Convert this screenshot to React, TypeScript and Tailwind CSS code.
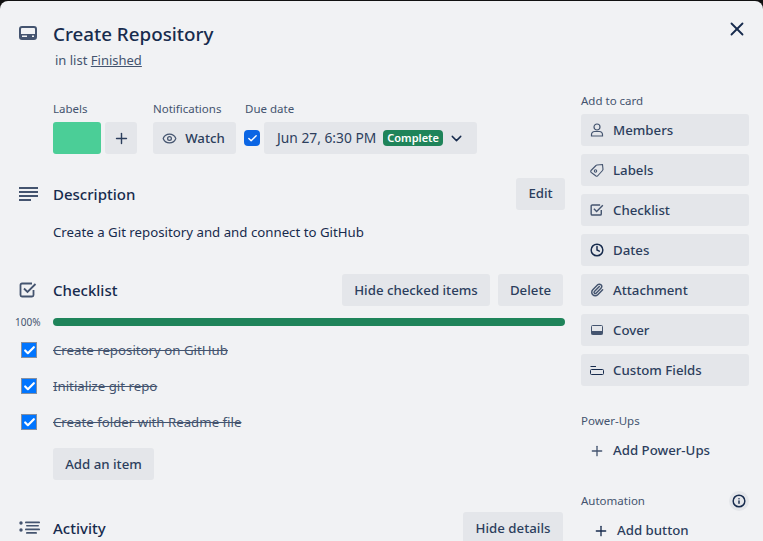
import { ReactNode } from 'react';
import { Plus, X, Eye, ChevronDown, Check, Clock, Paperclip, Info } from 'lucide-react';

function CardIcon({ className = '' }: { className?: string }) {
  return (
    <svg viewBox="0 0 18 14" className={className} fill="none">
      <rect x="1" y="1" width="16" height="12" rx="2" stroke="currentColor" strokeWidth="2" />
      <rect x="1" y="8" width="16" height="5" fill="currentColor" />
      <rect x="3" y="9.5" width="5" height="1.5" fill="#f1f2f4" />
      <rect x="13" y="9.5" width="2" height="1.5" fill="#f1f2f4" />
    </svg>
  );
}

function CheckIcon({ className = '' }: { className?: string }) {
  return (
    <svg viewBox="0 0 18 16" className={className} fill="none" stroke="currentColor" strokeWidth="1.8">
      <path d="M13 1.5H3A1.5 1.5 0 0 0 1.5 3v10A1.5 1.5 0 0 0 3 14.5h10a1.5 1.5 0 0 0 1.5-1.5V8" />
      <path d="M5 6.5l3.5 3.5L16.5 2" />
    </svg>
  );
}

function UserIcon() {
  return (
    <svg viewBox="0 0 14 14" className="w-3.5 h-3.5 text-[#44546f]" fill="none" stroke="currentColor" strokeWidth="1.2">
      <circle cx="7" cy="4" r="3" />
      <path d="M1.5 13v-1.5A3 3 0 0 1 4.5 8.5h5a3 3 0 0 1 3 3V13z" />
    </svg>
  );
}

function TagIcon() {
  return (
    <svg viewBox="0 0 14 14" className="w-3.5 h-3.5 text-[#44546f]" fill="none" stroke="currentColor" strokeWidth="1.1">
      <path d="M1 7.5L6 2.5A1.5 1.5 0 0 1 7 2l5.5-.5L13 6.5l-.5 1L8 12.5a1.5 1.5 0 0 1-2 .5L2 10a1.7 1.7 0 0 1-1-2.5z" />
      <circle cx="5.5" cy="8" r="1.2" />
    </svg>
  );
}

function CoverIcon() {
  return (
    <svg viewBox="0 0 12 10" className="w-3 h-2.5 text-[#44546f]" fill="none">
      <rect x="0.5" y="0.5" width="11" height="9" rx="1" stroke="currentColor" />
      <rect x="0.5" y="6" width="11" height="3.5" fill="currentColor" />
    </svg>
  );
}

function FieldsIcon() {
  return (
    <svg viewBox="0 0 14 9" className="w-3.5 h-[9px] text-[#172b4d]" fill="none" stroke="currentColor">
      <path d="M0.5 0.5H6" />
      <rect x="0.5" y="3.5" width="13" height="5" rx="1" />
    </svg>
  );
}

function ActivityIcon() {
  return (
    <svg viewBox="0 0 21 16" className="w-[21px] h-4 text-[#44546f]" fill="currentColor">
      <circle cx="2" cy="3" r="1.7" />
      <circle cx="2" cy="10" r="1.7" />
      <rect x="6" y="1.5" width="15" height="1.8" rx="0.9" />
      <rect x="7" y="5" width="13" height="1.6" rx="0.8" />
      <rect x="6" y="8.5" width="15" height="1.8" rx="0.9" />
      <rect x="7" y="12" width="11" height="1.8" rx="0.9" />
    </svg>
  );
}

function DescIcon() {
  return (
    <svg viewBox="0 0 20 14" className="w-5 h-3.5 text-[#44546f]" fill="currentColor">
      <rect x="0" y="0" width="19" height="2" />
      <rect x="0" y="4" width="19" height="2" />
      <rect x="0" y="8" width="19" height="2" />
      <rect x="0" y="12" width="12" height="2" />
    </svg>
  );
}

function Btn({ children, className = '' }: { children: ReactNode; className?: string }) {
  return (
    <button className={`h-8 rounded-[3px] bg-[#e4e6ea] text-[13.25px] text-[#2c3e5d] font-medium flex items-center justify-center whitespace-nowrap ${className}`}>
      {children}
    </button>
  );
}

function Section({ icon, title, action }: { icon: ReactNode; title: string; action: ReactNode }) {
  return (
    <div className="flex items-center h-8">
      <div className="w-[53px] pl-[19px] shrink-0 flex items-center">{icon}</div>
      <h3 className="text-[15px] font-medium text-[#172b4d] flex-1">{title}</h3>
      {action}
    </div>
  );
}

function ChecklistRow({ text }: { text: string }) {
  return (
    <div className="flex items-center h-9">
      <div className="w-[53px] pl-[21px] shrink-0">
        <span className="w-4 h-4 bg-[#0075ff] border border-[#8590a2] flex items-center justify-center">
          <Check size={13} strokeWidth={4} className="text-white" />
        </span>
      </div>
      <span className="text-[13.25px] pt-px line-through text-[#44546f]">{text}</span>
    </div>
  );
}

function SideBtn({ icon, label }: { icon: ReactNode; label: string }) {
  return (
    <button className="h-8 w-full rounded-[3px] bg-[#e4e6ea] flex items-center text-[13.25px] font-medium text-[#2c3e5d]">
      <span className="w-8 shrink-0 flex items-center justify-center">{icon}</span>
      <span className="pt-px">{label}</span>
    </button>
  );
}

export default function App() {
  const caption = 'text-[11.5px] leading-4 text-[#44546f]';
  return (
    <div className="w-[763px] h-[541px] overflow-hidden bg-[#111] pt-px font-['Noto_Sans',sans-serif]">
      <div className="relative h-[560px] bg-[#f1f2f4] rounded-t-lg">
        <button className="absolute right-[15px] top-[17px] text-[#172b4d]">
          <X size={22} strokeWidth={2} />
        </button>

        <div className="flex items-start h-[43px] pt-[19px] box-content">
          <div className="w-[53px] pl-[19px] pt-1.5 shrink-0">
            <CardIcon className="w-[18px] h-[14px] text-[#44546f]" />
          </div>
          <h2 className="text-[18.8px] font-medium leading-7 text-[#172b4d]">Create Repository</h2>
        </div>
        <p className="-mt-[13px] pl-[55px] text-[13px] leading-5 text-[#44546f]">
          in list <span className="underline">Finished</span>
        </p>

        <div className="flex mt-px">
          <div className="w-[565px] shrink-0">
            <div className="flex pl-[53px] mt-[30px]">
              <div className="mr-4">
                <div className={`${caption} mb-[5px]`}>Labels</div>
                <div className="flex gap-1">
                  <div className="w-12 h-8 rounded-[3px] bg-[#4bce97]" />
                  <button className="w-8 h-8 rounded-[3px] bg-[#e4e6ea] flex items-center justify-center text-[#2c3e5d]">
                    <Plus size={17} />
                  </button>
                </div>
              </div>
              <div className="mr-2">
                <div className={`${caption} mb-[5px]`}>Notifications</div>
                <Btn className="w-[83px] gap-2 pr-0.5">
                  <Eye size={15} className="text-[#44546f] shrink-0" />
                  <span className="pt-px">Watch</span>
                </Btn>
              </div>
              <div>
                <div className={`${caption} mb-[5px] pl-px`}>Due date</div>
                <div className="flex items-center gap-1">
                  <span className="w-4 h-4 rounded-sm bg-[#0c66e4] flex items-center justify-center">
                    <Check size={11} strokeWidth={3} className="text-white" />
                  </span>
                  <Btn className="w-[213px] !justify-start pl-[13px]">
                    <span className="text-[13.8px] font-normal">Jun 27, 6:30 PM</span>
                    <span className="ml-[7px] px-1 h-4 rounded-sm bg-[#1f845a] text-white text-[11px] font-semibold leading-4">Complete</span>
                    <ChevronDown size={17} className="ml-[5px] text-[#172b4d] shrink-0" />
                  </Btn>
                </div>
              </div>
            </div>

            <div className="mt-6">
              <Section icon={<DescIcon />} title="Description" action={<Btn className="w-[49px]">Edit</Btn>} />
              <p className="pl-[53px] mt-3 text-[13.25px] leading-5 text-[#172b4d]">Create a Git repository and and connect to GitHub</p>
            </div>

            <div className="mt-[32px] pr-0.5">
              <Section
                icon={<CheckIcon className="w-[18px] h-4 text-[#44546f]" />}
                title="Checklist"
                action={
                  <div className="flex gap-2">
                    <Btn className="w-[148px] pt-px">Hide checked items</Btn>
                    <Btn className="w-[65px] pt-px">Delete</Btn>
                  </div>
                }
              />
            </div>

            <div className="flex items-center h-2 mt-3">
              <span className="w-[53px] pl-[15px] shrink-0 text-[10px] text-[#44546f]">100%</span>
              <div className="flex-1 h-2 rounded bg-[#1f845a]" />
            </div>

            <div className="mt-1.5">
              <ChecklistRow text="Create repository on GitHub" />
              <ChecklistRow text="Initialize git repo" />
              <ChecklistRow text="Create folder with Readme file" />
            </div>

            <div className="pl-[53px] mt-2">
              <Btn className="w-[101px] pt-px">Add an item</Btn>
            </div>

            <div className="mt-8 pr-0.5">
              <Section icon={<ActivityIcon />} title="Activity" action={<Btn className="w-[100px] pt-px">Hide details</Btn>} />
            </div>
          </div>

          <aside className="w-[168px] ml-4 shrink-0 mt-[22px]">
            <div className={`${caption} mb-[5px]`}>Add to card</div>
            <div className="flex flex-col gap-2">
              <SideBtn icon={<UserIcon />} label="Members" />
              <SideBtn icon={<TagIcon />} label="Labels" />
              <SideBtn icon={<CheckIcon className="w-3.5 h-3.5 text-[#44546f]" />} label="Checklist" />
              <SideBtn icon={<Clock className="w-3.5 h-3.5 text-[#172b4d]" strokeWidth={2.5} />} label="Dates" />
              <SideBtn icon={<Paperclip className="w-3.5 h-3.5 text-[#44546f]" strokeWidth={2.5} />} label="Attachment" />
              <SideBtn icon={<CoverIcon />} label="Cover" />
              <SideBtn icon={<FieldsIcon />} label="Custom Fields" />
            </div>

            <div className={`${caption} mt-[27px]`}>Power-Ups</div>
            <button className="h-8 mt-1.5 flex items-center text-[13.25px] font-medium text-[#2c3e5d]">
              <span className="w-8 flex items-center justify-center">
                <Plus size={16} className="text-[#44546f]" />
              </span>
              Add Power-Ups
            </button>

            <div className="flex items-center justify-between mt-6">
              <span className={caption}>Automation</span>
              <span className="w-5 h-5 rounded-full bg-[#e4e6ea] flex items-center justify-center">
                <Info size={14} strokeWidth={2.5} className="text-[#172b4d]" />
              </span>
            </div>
            <button className="h-8 mt-1 pl-3 flex items-center text-[13.25px] font-medium text-[#2c3e5d]">
              <Plus size={16} className="text-[#172b4d] mr-2" />
              Add button
            </button>
          </aside>
        </div>
      </div>
    </div>
  );
}
